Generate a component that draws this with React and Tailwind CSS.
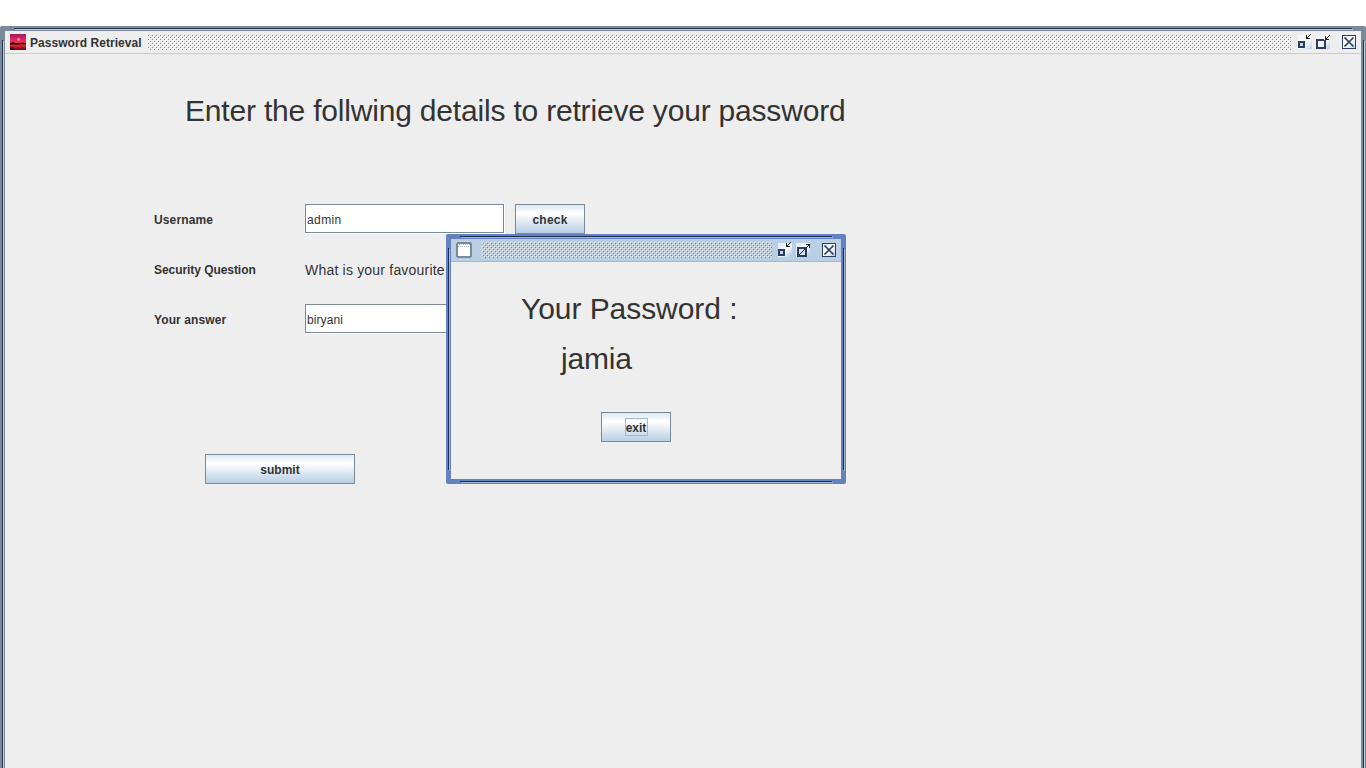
function Bumps({ id, light, dark }) {
  return (
    <svg className="block h-full w-full" shapeRendering="crispEdges" aria-hidden="true">
      <defs>
        <pattern id={id} width="4" height="4" patternUnits="userSpaceOnUse">
          <rect x="0" y="0" width="1" height="1" fill={light} />
          <rect x="2" y="2" width="1" height="1" fill={light} />
          <rect x="1" y="1" width="1" height="1" fill={dark} />
          <rect x="3" y="3" width="1" height="1" fill={dark} />
        </pattern>
      </defs>
      <rect width="100%" height="100%" fill={`url(#${id})`} />
    </svg>
  );
}

function Shine({ id, active }) {
  return (
    <defs>
      <linearGradient id={id} x1="0" y1="0" x2="1" y2="1">
        <stop offset="0.2" stopColor={active ? "#e4eef8" : "#f4f6f9"} />
        <stop offset="0.5" stopColor="#ffffff" />
        <stop offset="1" stopColor={active ? "#a9c3e0" : "#b8cfe5"} />
      </linearGradient>
    </defs>
  );
}

function MinimizeIcon({ id, active }) {
  return (
    <svg className="h-4 w-4 shrink-0" viewBox="0 0 16 16" shapeRendering="crispEdges">
      <Shine id={id} active={active} />
      <rect x="1" y="1" width="14" height="14" fill={`url(#${id})`} />
      <rect x="2" y="8" width="5" height="5" fill="#c3d6ea" stroke="#2b3e5c" strokeWidth="2" />
      <path d="M9 1h1v3h3v1H9zM10 3h1v1h-1zM11 2h1v1h-1zM12 1h1v1h-1zM13 0h1v1h-1z" fill="#222" />
    </svg>
  );
}

function RestoreIcon({ id, active }) {
  return (
    <svg className="h-4 w-4 shrink-0" viewBox="0 0 16 16" shapeRendering="crispEdges">
      <Shine id={id} active={active} />
      <rect x="1" y="1" width="14" height="14" fill={`url(#${id})`} />
      <rect x="2" y="6" width="8" height="8" fill="#eaf1f8" stroke="#2b3e5c" strokeWidth="2" />
      <path d="M9 1h6v5H9z" fill="#ffffff" />
      <path d="M10 2h1v3h3v1h-4zM11 4h1v1h-1zM12 3h1v1h-1zM13 2h1v1h-1zM14 1h1v1h-1z" fill="#222" />
    </svg>
  );
}

function MaximizeIcon({ id, active }) {
  return (
    <svg className="h-4 w-4 shrink-0" viewBox="0 0 16 16" shapeRendering="crispEdges">
      <Shine id={id} active={active} />
      <rect x="1" y="1" width="14" height="14" fill={`url(#${id})`} />
      <rect x="3" y="6" width="8" height="8" fill="#d5e3f1" stroke="#2b3e5c" strokeWidth="2" />
      <path d="M11 2h4v4h-1V3h-3zM13 3h1v1h-1zM12 4h1v1h-1zM11 5h1v1h-1zM10 6h1v1h-1zM9 7h1v1H9zM8 8h1v1H8zM7 9h1v1H7zM6 10h1v1H6zM5 11h1v1H5zM4 12h1v1H4z" fill="#222" />
    </svg>
  );
}

function CloseIcon({ id, active }) {
  return (
    <svg className="h-4 w-4 shrink-0" viewBox="0 0 16 16" shapeRendering="crispEdges">
      <Shine id={id} active={active} />
      <rect x="1" y="1" width="14" height="14" fill={`url(#${id})`} />
      <path d="M1 1h14v14H1zM2 2v12h12V2z" fill="#2b3e5c" fillRule="evenodd" />
      <path d="M3.5 3.5l9 9M12.5 3.5l-9 9" stroke="#2b3e5c" strokeWidth="1.7" shapeRendering="auto" />
    </svg>
  );
}

function SunsetIcon() {
  return (
    <svg className="h-4 w-4 shrink-0" viewBox="0 0 16 16">
      <defs>
        <linearGradient id="sky" x1="0" y1="0" x2="0" y2="1">
          <stop offset="0" stopColor="#a3195c" />
          <stop offset=".35" stopColor="#e82566" />
          <stop offset=".6" stopColor="#f03a3a" />
          <stop offset=".8" stopColor="#c81825" />
          <stop offset="1" stopColor="#5a0a14" />
        </linearGradient>
      </defs>
      <rect width="16" height="16" fill="url(#sky)" />
      <circle cx="8.5" cy="5.5" r="1.6" fill="#ff8a8a" />
      <path d="M0 9l3-1 2 1 4 .3 3-.8 4 .5v1.5l-5-.2L7 11l-3-.6L0 11zM0 13l3 .5 2 2.500H0z" fill="#3a0812" />
    </svg>
  );
}

function WindowIcon() {
  return (
    <svg className="h-4 w-4 shrink-0" viewBox="0 0 16 16" shapeRendering="crispEdges">
      <path d="M1 0h14v1h1v14h-1v1H1v-1H0V1h1z" fill="#7a8a99" />
      <rect x="2" y="2" width="12" height="3" fill="#a3b8cc" />
      <path d="M2 2h1v1H2zM4 2h1v1H4zM6 2h1v1H6zM8 2h1v1H8zM10 2h1v1h-1zM12 2h1v1h-1zM3 4h1v1H3zM5 4h1v1H5zM7 4h1v1H7zM9 4h1v1H9zM11 4h1v1h-1zM13 4h1v1h-1z" fill="#ffffff" />
      <rect x="2" y="3" width="12" height="1" fill="#ffffff" />
      <rect x="2" y="5" width="12" height="9" fill="#ffffff" />
    </svg>
  );
}

function EdgeLines({ highlight, dark }) {
  return (
    <>
      <div className={`absolute top-[2px] right-[14px] left-[14px] h-px ${dark}`} />
      <div className={`absolute top-[3px] right-[13px] left-[15px] h-px ${highlight}`} />
      <div className={`absolute right-[14px] bottom-[2px] left-[14px] h-px ${dark}`} />
      <div className={`absolute right-[13px] bottom-[1px] left-[15px] h-px ${highlight}`} />
      <div className={`absolute top-[14px] bottom-[14px] left-[2px] w-px ${dark}`} />
      <div className={`absolute top-[15px] bottom-[13px] left-[3px] w-px ${highlight}`} />
      <div className={`absolute top-[14px] right-[2px] bottom-[14px] w-px ${dark}`} />
      <div className={`absolute top-[15px] right-[1px] bottom-[13px] w-px ${highlight}`} />
    </>
  );
}

function Button({ className, children }) {
  return (
    <button
      className={`flex h-[30px] items-center justify-center border border-[#7a8a99] bg-linear-to-b from-[#dde8f3] via-white via-30% to-[#b8cfe5] text-[12px] leading-[14px] font-bold text-[#333] ${className}`}
    >
      {children}
    </button>
  );
}

function TextField({ value, className }) {
  return (
    <div className="h-[30px] w-[200px] border-r border-b border-white">
      <div className={`flex h-[29px] w-[199px] items-center border border-[#7a8a99] bg-white pt-[2px] pl-px text-[12px] text-[#333] ${className}`}>
        {value}
      </div>
    </div>
  );
}

export default function App() {
  return (
    <main className="relative h-[768px] w-[1366px] overflow-hidden bg-white pt-[26px] font-['Liberation_Sans',Arial,sans-serif] text-[#333]">
      <section className="relative h-[760px] w-[1366px] rounded-[2px] bg-[#7a8a99] p-[5px]">
        <EdgeLines highlight="bg-[#b8cfe5]" dark="bg-[#26364d]" />
        <div className="h-full bg-[#eeeeee]">
          <header className="flex h-[23px] items-center border-b border-[#b8cfe5] pl-[5px]">
            <SunsetIcon />
            <h2 className="ml-1 w-[117px] pt-[2px] text-[12px] font-bold tracking-[0.05px] whitespace-nowrap text-[#333]">Password Retrieval</h2>
            <div className="h-4 w-[1144px]">
              <Bumps id="bumps-main" light="#ffffff" dark="#7a8a99" />
            </div>
            <div className="ml-[6px] flex">
              <MinimizeIcon id="m1" />
              <div className="ml-[2px]"><RestoreIcon id="m2" /></div>
              <div className="ml-[10px]"><CloseIcon id="m3" /></div>
            </div>
          </header>
          <div className="pt-[37px]">
            <h1 className="ml-[180px] h-10 text-[30px] leading-10 tracking-[-0.19px] whitespace-nowrap">Enter the follwing details to retrieve your password</h1>
            <div className="mt-[73px] ml-[149px] grid grid-cols-[151px_210px_70px] gap-y-5">
              <label className="flex h-[30px] items-center pt-[2px] text-[12px] font-bold tracking-[0.14px]">Username</label>
              <TextField value="admin" className="tracking-[0.4px]" />
              <Button className="w-[70px] pt-[2px] tracking-[0.2px]">check</Button>
              <label className="flex h-[30px] items-center pt-[2px] text-[12px] font-bold tracking-[-0.06px]">Security Question</label>
              <p className="flex h-[30px] items-center pt-[2px] text-[14px] tracking-[0.2px] whitespace-nowrap">What is your favourite</p>
              <span />
              <label className="flex h-[30px] items-center pt-[2px] text-[12px] font-bold tracking-[0.1px]">Your answer</label>
              <TextField value="biryani" className="tracking-[0.08px]" />
            </div>
            <Button className="mt-[120px] ml-[200px] w-[150px] pt-[2px]">submit</Button>
          </div>
        </div>
      </section>

      <section className="absolute top-[234px] left-[446px] h-[250px] w-[400px] rounded-[2px] bg-[#6382bf] p-[5px]">
        <EdgeLines highlight="bg-[#a3b8cc]" dark="bg-[#1b2d55]" />
        <div className="h-full bg-[#eeeeee]">
          <header className="flex h-[23px] items-center border-b border-[#a3b8cc] bg-[#b8cfe5] pl-[5px]">
            <WindowIcon />
            <div className="ml-[10px] h-4 w-[290px]">
              <Bumps id="bumps-dialog" light="#ffffff" dark="#6382bf" />
            </div>
            <div className="ml-[5px] flex">
              <MinimizeIcon id="d1" active />
              <div className="ml-[2px]"><MaximizeIcon id="d2" active /></div>
              <div className="ml-[10px]"><CloseIcon id="d3" active /></div>
            </div>
          </header>
          <div className="pt-[27px]">
            <p className="ml-[70px] h-10 text-[30px] leading-10 tracking-[-0.06px] whitespace-nowrap">Your Password :</p>
            <p className="mt-[10px] ml-[110px] h-10 text-[30px] leading-10 tracking-[-0.2px]">jamia</p>
            <Button className="mt-[33px] ml-[150px] w-[70px]">
              <span className="flex h-[18px] w-[23px] items-center justify-center border border-[#a3b8cc] pt-[2px]">exit</span>
            </Button>
          </div>
        </div>
      </section>
    </main>
  );
}
